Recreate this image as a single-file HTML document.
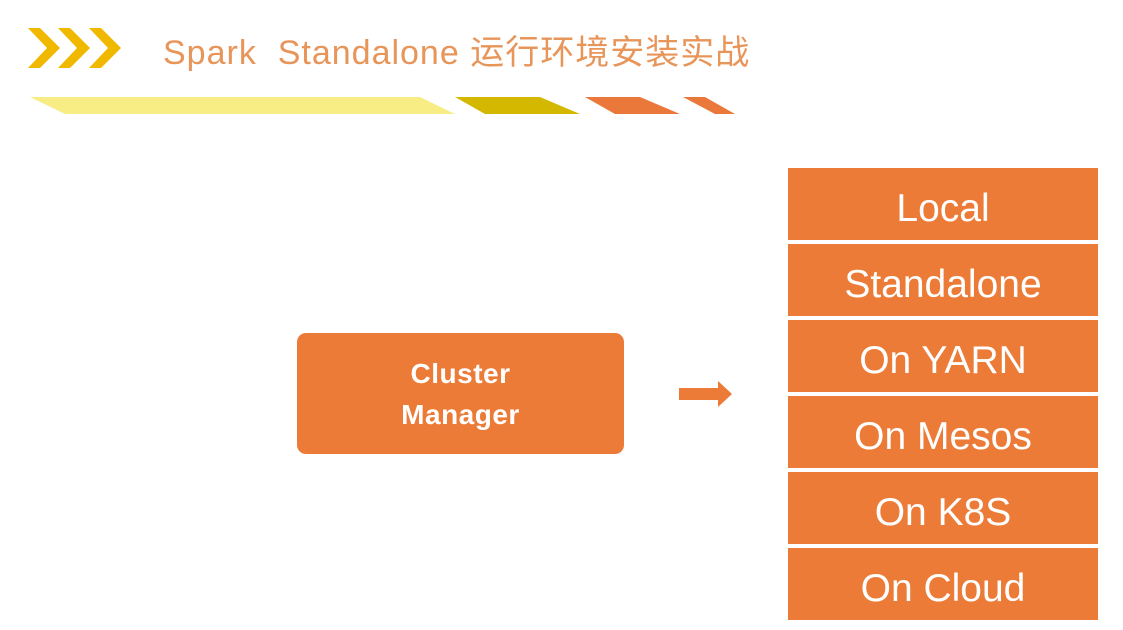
<!DOCTYPE html>
<html><head><meta charset="utf-8"><style>
html,body{margin:0;padding:0;width:1123px;height:629px;overflow:hidden;background:#fff;font-family:"Liberation Sans","Noto Sans CJK SC",sans-serif;}
.title{position:absolute;left:163px;top:25px;font-size:34px;color:#E8955A;white-space:nowrap;letter-spacing:1px}
.cm{position:absolute;left:297px;top:333px;width:327px;height:121px;background:#EC7B37;border-radius:9px;color:#fff;font-weight:bold;font-size:28px;line-height:41px;text-align:center;display:flex;align-items:center;justify-content:center;letter-spacing:0.5px}
.box{position:absolute;left:788px;width:310px;height:72px;background:#EC7B37;color:#fff;font-size:39px;text-align:center;line-height:82px}
</style></head><body>
<svg width="1123" height="629" style="position:absolute;left:0;top:0">
<g fill="#F1B800">
<polygon points="28,28 40,28 60,48 40,68 28,68 47,48"/>
<polygon points="58,28 70,28 90,48 70,68 58,68 77,48"/>
<polygon points="89,28 101,28 121,48 101,68 89,68 108,48"/>
</g>
<polygon points="30,97 420,97 455,114 65,114" fill="#F8EC85"/>
<polygon points="455,97 540,97 580,114 485,114" fill="#D4B800"/>
<polygon points="585,97 640,97 680,114 615,114" fill="#EA783A"/>
<polygon points="683,97 705,97 735,114 715,114" fill="#EA783A"/>
<polygon points="679,388 718,388 718,381 732,394 718,407 718,400 679,400" fill="#EC7B37"/>
</svg>
<div class="title">Spark&nbsp; Standalone 运行环境安装实战</div>
<div class="cm"><div>Cluster<br>Manager</div></div>
<div class="box" style="top:168px">Local</div>
<div class="box" style="top:244px">Standalone</div>
<div class="box" style="top:320px">On YARN</div>
<div class="box" style="top:396px">On Mesos</div>
<div class="box" style="top:472px">On K8S</div>
<div class="box" style="top:548px">On Cloud</div>
</body></html>
